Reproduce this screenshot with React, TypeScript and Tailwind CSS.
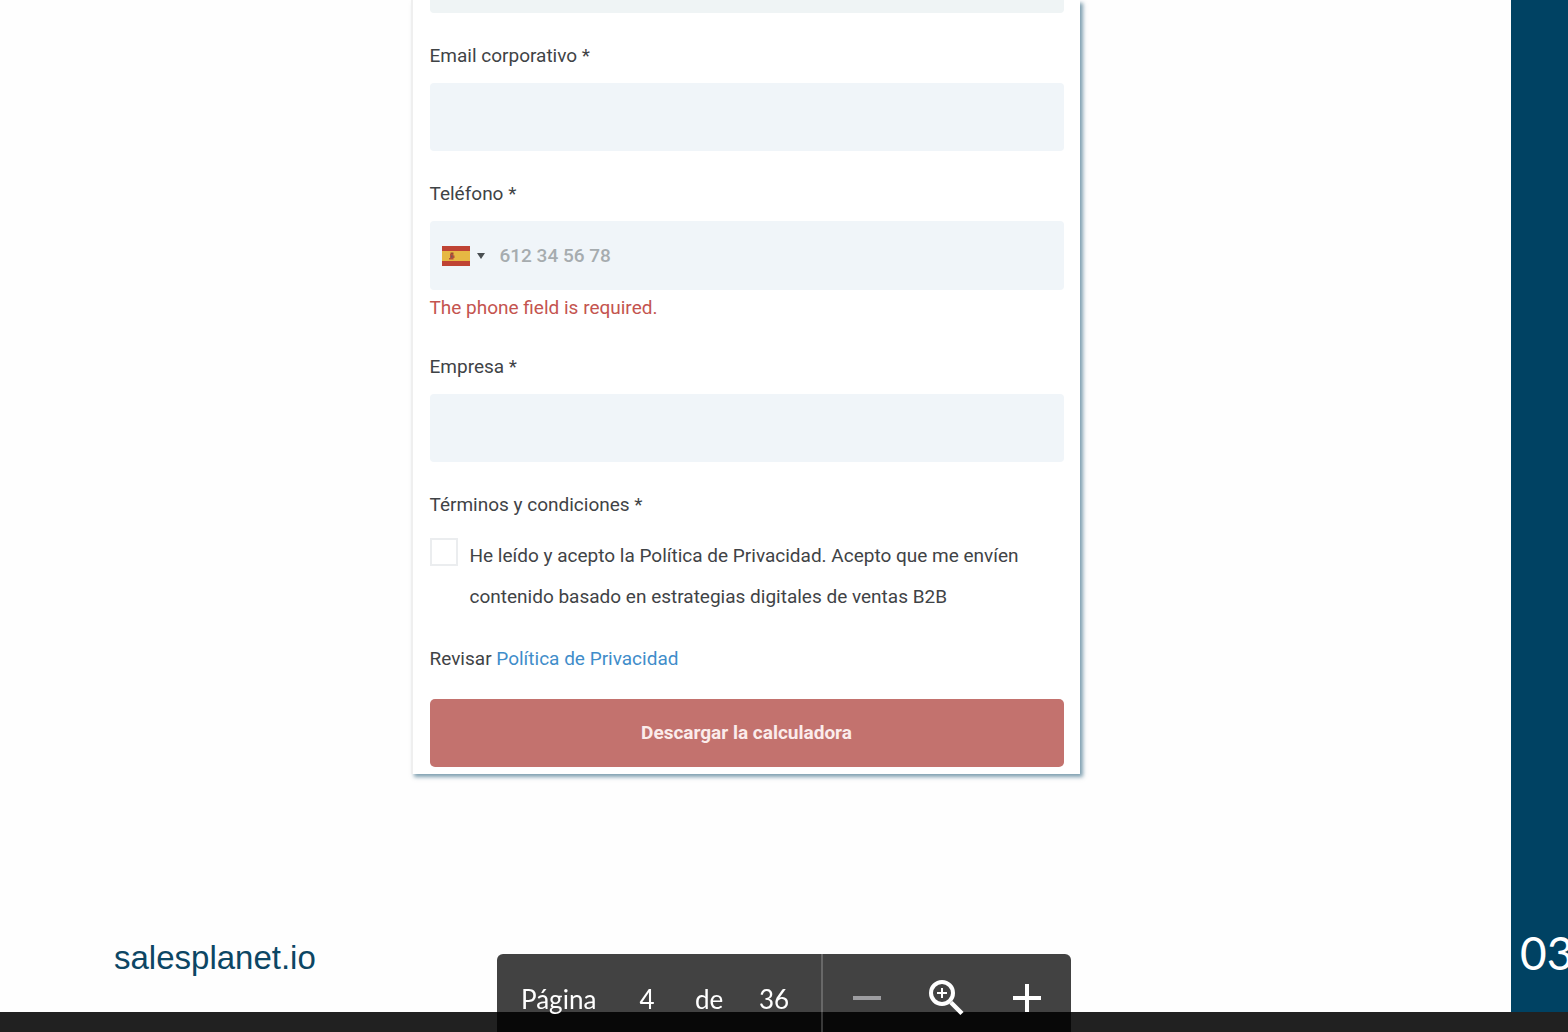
import { useState } from "react";
import type { InputHTMLAttributes } from "react";

const labelClass = "block text-[19px] leading-6 text-[#3f4346]";
const inputClass = "w-full h-[68px] px-4 rounded-sm bg-[#f0f5f9] text-[19px] text-[#3f4346] outline-none";

function TextField({ id, label, ...props }: { id: string; label: string } & InputHTMLAttributes<HTMLInputElement>) {
    return (
        <div>
            <label htmlFor={id} className={labelClass}>
                {label}
            </label>
            <input id={id} className={`${inputClass} mt-[15px] block`} {...props} />
        </div>
    );
}

function SpainFlag() {
    return (
        <svg viewBox="0 0 28 20" className="w-7 h-5" aria-hidden="true">
            <rect width="28" height="20" fill="#bf4334" />
            <rect y="5" width="28" height="10" fill="#e6b843" />
            <path d="M8 8h3.500v1.500h1V12h-1v1.500H7V12h1z" fill="#b5513a" />
            <path d="M8.500 6.500h3V8h-3z" fill="#9c4a33" />
            <path d="M9 9.500h1.500v2H9z" fill="#6f5a5a" />
        </svg>
    );
}

function DownloadForm() {
    const [accepted, setAccepted] = useState(false);

    return (
        <form
            onSubmit={(e) => e.preventDefault()}
            className="w-[669px] mx-auto pl-[17px] pr-4 pb-[7px] bg-white border-l-2 border-[#efefef] shadow-[3px_3px_4px_rgba(0,66,99,0.5)]"
        >
            <input aria-label="Nombre" className="block w-full h-[13px] rounded-b-sm bg-[#eff4f5] outline-none" />

            <div className="mt-[31px]">
                <TextField id="email" label="Email corporativo *" type="email" />
            </div>

            <div className="mt-[31px]">
                <label htmlFor="phone" className={labelClass}>
                    Teléfono *
                </label>
                <div className="mt-[15px] h-[69px] flex items-center rounded-sm bg-[#f0f5f9]">
                    <button type="button" aria-label="España" className="pl-3 flex items-center gap-[7px]">
                        <SpainFlag />
                        <svg viewBox="0 0 8 6" className="w-2 h-1.5" aria-hidden="true">
                            <path d="M0 0h8L4 6z" fill="#4a4f52" />
                        </svg>
                    </button>
                    <input
                        id="phone"
                        type="tel"
                        placeholder="612 34 56 78"
                        className="flex-1 min-w-0 h-full ml-[15px] bg-transparent text-[19px] font-medium text-[#3f4346] placeholder:text-[#a6acaf] outline-none"
                    />
                </div>
                <p className="mt-1.5 text-[19px] leading-6 text-[#c4544f]">The phone field is required.</p>
            </div>

            <div className="mt-[35px]">
                <TextField id="company" label="Empresa *" type="text" />
            </div>

            <p className={`mt-[31px] ${labelClass}`}>Términos y condiciones *</p>
            <div className="mt-[18px] flex items-start gap-3">
                <input
                    id="terms"
                    type="checkbox"
                    checked={accepted}
                    onChange={(e) => setAccepted(e.target.checked)}
                    className="appearance-none mt-[3px] w-7 h-7 shrink-0 border-2 border-[#ebedef] bg-white checked:bg-[#4792cc]"
                />
                <label htmlFor="terms" className="text-[19px] leading-[41px] text-[#3f4346]">
                    He leído y acepto la Política de Privacidad. Acepto que me envíen contenido basado en estrategias
                    digitales de ventas B2B
                </label>
            </div>

            <p className="mt-[30px] text-[19px] leading-6 text-[#3f4346]">
                Revisar{" "}
                <a href="#privacidad" className="text-[#3f8dca]">
                    Política de Privacidad
                </a>
            </p>

            <button
                type="submit"
                className="mt-7 block w-full h-[68px] rounded-[5px] bg-[#c3726e] text-[19px] font-bold text-[#fbeceb]"
            >
                Descargar la calculadora
            </button>
        </form>
    );
}

function PageToolbar() {
    const [page, setPage] = useState("4");

    return (
        <div className="fixed bottom-0 inset-x-0 flex justify-center pointer-events-none">
            <div className="pointer-events-auto flex w-[574px] h-[78px] rounded-t-md bg-black/74 font-['Lato',sans-serif] text-[26px] text-white">
                <div className="w-[324px] pl-6 pt-3 flex items-center">
                    <label htmlFor="page" className="w-[98px]">
                        Página
                    </label>
                    <input
                        id="page"
                        value={page}
                        onChange={(e) => setPage(e.target.value)}
                        className="w-[56px] bg-transparent text-center outline-none"
                    />
                    <span className="ml-5 w-16">de</span>
                    <span>36</span>
                </div>
                <div className="w-0.5 bg-white/20" />
                <div className="flex-1 pt-2.5 pl-[30px] pr-[30px] flex items-center justify-between">
                    <button type="button" aria-label="Alejar">
                        <svg viewBox="0 0 28 28" className="w-7 h-7" aria-hidden="true">
                            <path d="M0 14h28" stroke="#9d9da0" strokeWidth="4" />
                        </svg>
                    </button>
                    <button type="button" aria-label="Ajustar zoom">
                        <svg viewBox="0 0 36 36" className="w-9 h-9" fill="none" stroke="#fff" aria-hidden="true">
                            <circle cx="13" cy="13" r="11" strokeWidth="4" />
                            <path d="M22 22.500L33 33.500" strokeWidth="4.500" />
                            <path d="M8 13h10M13 8v10" strokeWidth="2" />
                        </svg>
                    </button>
                    <button type="button" aria-label="Acercar">
                        <svg viewBox="0 0 28 28" className="w-7 h-7" aria-hidden="true">
                            <path d="M0 14h28M14 0v28" stroke="#fff" strokeWidth="4" />
                        </svg>
                    </button>
                </div>
            </div>
        </div>
    );
}

export default function App() {
    return (
        <div className="h-screen flex flex-col overflow-hidden bg-[#212121] font-['Roboto',sans-serif]">
            <div className="flex-1 min-h-0 flex bg-[#fefefe]">
                <main className="flex-1 flex flex-col justify-between">
                    <div className="pr-[21px]">
                        <DownloadForm />
                    </div>
                    <footer className="pl-[114px] pb-[34px] font-['Liberation_Sans',sans-serif] text-[33px] leading-10 text-[#0c4664]">
                        salesplanet.io
                    </footer>
                </main>
                <aside className="w-[57px] pl-[9px] pb-[31px] flex items-end overflow-hidden bg-[#004263] font-['Lato',sans-serif] text-[46px] leading-[56px] text-white">
                    03
                </aside>
            </div>
            <div className="h-5 shrink-0" />
            <PageToolbar />
        </div>
    );
}
